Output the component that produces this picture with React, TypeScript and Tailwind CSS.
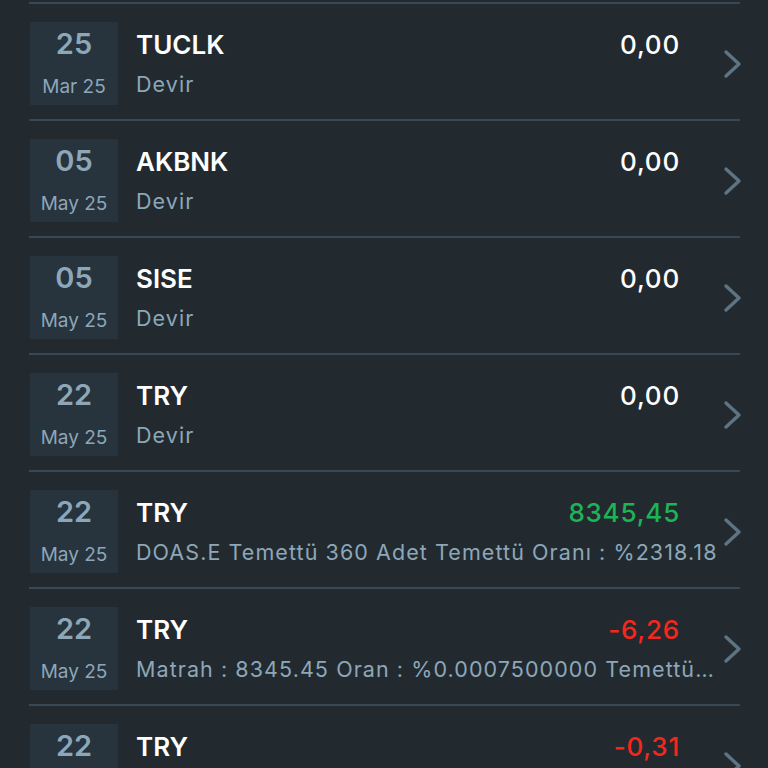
type Row = {
  day: string;
  month: string;
  title: string;
  amount: string;
  tone: "neutral" | "up" | "down";
  note: string;
};

const rows: Row[] = [
  { day: "25", month: "Mar 25", title: "TUCLK", amount: "0,00", tone: "neutral", note: "Devir" },
  { day: "05", month: "May 25", title: "AKBNK", amount: "0,00", tone: "neutral", note: "Devir" },
  { day: "05", month: "May 25", title: "SISE", amount: "0,00", tone: "neutral", note: "Devir" },
  { day: "22", month: "May 25", title: "TRY", amount: "0,00", tone: "neutral", note: "Devir" },
  {
    day: "22",
    month: "May 25",
    title: "TRY",
    amount: "8345,45",
    tone: "up",
    note: "DOAS.E Temettü 360 Adet Temettü Oranı : %2318.18",
  },
  {
    day: "22",
    month: "May 25",
    title: "TRY",
    amount: "-6,26",
    tone: "down",
    note: "Matrah : 8345.45 Oran : %0.0007500000 Temettü Stopaj Kesintisi",
  },
  { day: "22", month: "May 25", title: "TRY", amount: "-0,31", tone: "down", note: "BSMV" },
];

const toneClass = {
  neutral: "text-white",
  up: "text-[#1db456]",
  down: "text-[#f5271d]",
};

function Chevron() {
  return (
    <svg width="20" height="30" viewBox="0 0 20 30" fill="none" className="absolute right-[-3px] top-[45px]">
      <polyline
        points="3,3 16,15 3,27"
        stroke="#5f7482"
        strokeWidth="3.4"
        strokeLinecap="round"
        strokeLinejoin="round"
      />
    </svg>
  );
}

function TransactionRow({ row }: { row: Row }) {
  return (
    <div className="relative border-t-2 border-[#3a4853] pt-[18px] pb-[14px]">
      <div className="flex items-stretch">
        {/* date badge */}
        <div className="ml-px flex h-[83px] w-[88px] shrink-0 flex-col items-center pt-[5px] bg-[#27333d]">
          <span className="text-[29px] leading-[34px] font-semibold text-[#8da7b8]">{row.day}</span>
          <span className="mt-[15px] text-[19px] leading-[22px] text-[#8da7b8]">{row.month}</span>
        </div>

        <div className="ml-[18px] flex min-w-0 flex-1 flex-col pt-[6px]">
          <div className="flex items-start justify-between pr-[60px]">
            <span className="text-[26px] leading-[34px] font-semibold text-white">{row.title}</span>
            <span className={`text-[26px] leading-[34px] font-medium tracking-[0.03em] ${toneClass[row.tone]}`}>
              {row.amount}
            </span>
          </div>
          <div className="mt-[8px] truncate pr-[22px] text-[21.5px] leading-[28px] tracking-[0.05em] text-[#8da7b8]">
            {row.note}
          </div>
        </div>
      </div>

      <Chevron />
    </div>
  );
}

export default function App() {
  return (
    <div
      className="h-[768px] w-[768px] overflow-hidden bg-[#222a30] pl-[29px] pr-[28px] pt-[2px]"
      style={{ fontFamily: "Inter, 'Open Sans', sans-serif" }}
    >
      {rows.map((row, i) => (
        <TransactionRow key={i} row={row} />
      ))}
    </div>
  );
}
